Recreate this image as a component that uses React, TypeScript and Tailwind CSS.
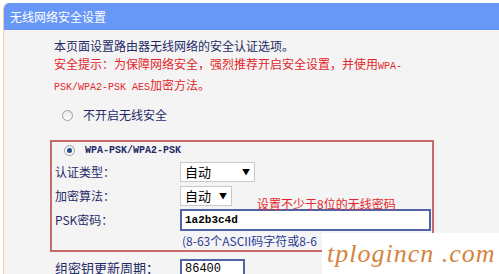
import React from 'react';

const cjk = { fontFamily: '"Noto Sans CJK SC", "Liberation Sans", sans-serif' };
const mono = { fontFamily: '"Liberation Mono", "Noto Sans CJK SC", monospace' };

function Radio({ checked }: { checked?: boolean }) {
  return (
    <span className="w-[11px] h-[11px] rounded-full border border-[#a0a0a0] bg-gradient-to-b from-[#e8e8e8] to-white flex items-center justify-center shrink-0">
      {checked && <span className="w-[5px] h-[5px] rounded-full bg-[#1f4f8f]" />}
    </span>
  );
}

function Select({ w }: { w: string }) {
  return (
    <div className={`${w} h-[20px] bg-white border border-[#c8c8c8] flex items-center justify-between pl-[4px] pr-[4px] text-[13px] text-black`}>
      <span>自动</span>
      <span className="text-[8px] leading-none">▼</span>
    </div>
  );
}

export default function App() {
  return (
    <div className="w-[499px] h-[274px] bg-white overflow-hidden relative pt-[3px] pl-[3px] text-[12px]" style={cjk}>
      <div className="h-full rounded-tl-[6px] border-l border-[#f2cf98] bg-[#f4f4f4] overflow-hidden">
        <div className="h-[27px] bg-[#6797f7] text-white text-[12px] pl-[6px] flex items-center">无线网络安全设置</div>

        <div className="pl-[50px] pt-[7px] leading-[18px]">
          <div className="text-[#1f2a66]">本页面设置路由器无线网络的安全认证选项。</div>
          <div className="text-[#e3262a]">
            安全提示：为保障网络安全，强烈推荐开启安全设置，并使用<span style={mono} className="text-[10px]">WPA-</span>
          </div>
          <div className="text-[#e3262a]">
            <span style={mono} className="text-[10px]">PSK/WPA2-PSK AES</span>加密方法。
          </div>
        </div>

        <div className="pl-[58px] mt-[9px] h-[18px] flex items-center gap-[10px] text-[#1f2a66]">
          <Radio />
          <span>不开启无线安全</span>
        </div>

        <div className="relative ml-[46px] mt-[16px] w-[384px] border-2 border-[#c96a6a] pl-[3px]">
          <div className="h-[16px] flex items-center pl-[9px] gap-[10px]">
            <Radio checked />
            <span style={mono} className="text-[10px] font-bold text-[#1f2a66]">WPA-PSK/WPA2-PSK</span>
          </div>
          <div className="h-[20px] mt-[4px] flex items-center">
            <span className="w-[125px] text-[#1f2a66]">认证类型：</span>
            <Select w="w-[75px]" />
          </div>
          <div className="h-[19px] mt-[4px] flex items-center">
            <span className="w-[125px] text-[#1f2a66]">加密算法：</span>
            <Select w="w-[52px]" />
          </div>
          <div className="h-[22px] mt-[4px] flex items-center">
            <span className="w-[125px] text-[#1f2a66]">PSK密码：</span>
            <div className="w-[251px] h-[22px] bg-white border-2 border-[#5262a6] flex items-center pl-[3px] text-[11px] font-bold text-black" style={mono}>
              1a2b3c4d
            </div>
          </div>
          <div className="h-[19px] pt-[1px] flex items-center pl-[127px] text-[#2c3c96]">
            (8-63个ASCII码字符或8-6
          </div>
          <div className="absolute left-[205px] top-[53px] text-[12px] text-[#e3262a]">设置不少于8位的无线密码</div>
        </div>

        <div className="mt-[4px] flex items-start pl-[51px]">
          <span className="w-[125px] pt-[3px] leading-[18px] text-[13px] text-[#1f2a66]">组密钥更新周期：</span>
          <div className="w-[65px] h-[20px] mt-[3px] bg-white border-2 border-[#5262a6] flex items-center pl-[3px] text-[12px] text-black" style={mono}>
            86400
          </div>
        </div>
      </div>

      <div className="absolute left-[322px] top-[233px] right-0 bottom-0 bg-white flex items-center pl-[5px]">
        <span className="italic text-[26px] text-[#d4843e] tracking-[1px]" style={{ fontFamily: '"Liberation Serif", serif' }}>
          tplogincn .com
        </span>
      </div>
    </div>
  );
}
